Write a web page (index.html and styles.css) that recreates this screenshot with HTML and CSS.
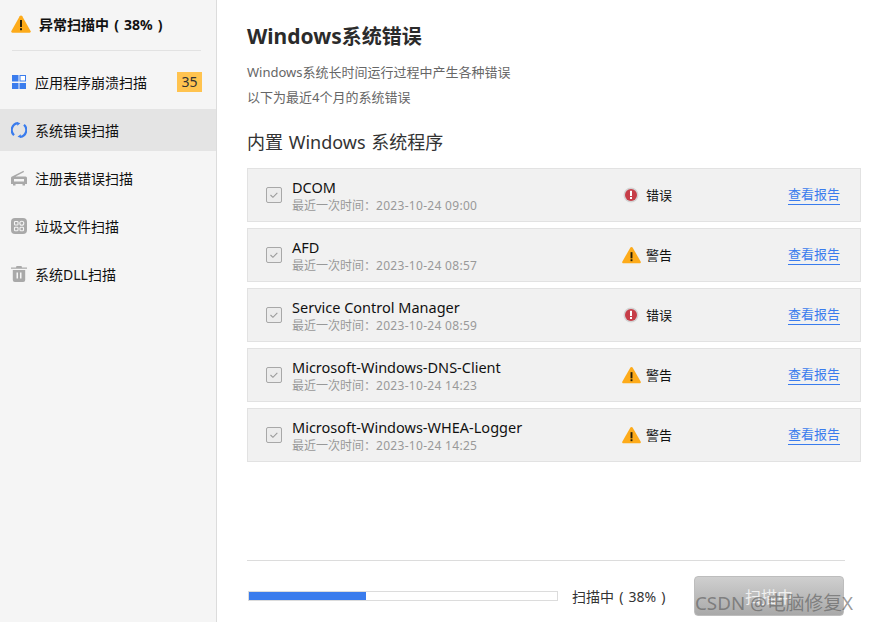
FILE: index.html
```html
<!DOCTYPE html>
<html lang="zh-CN">
<head>
<meta charset="utf-8">
<title>Windows系统错误</title>
<link rel="stylesheet" href="styles.css">
</head>
<body>
<div class="app">
  <aside class="sidebar">
    <div class="status">
      <svg class="status-icon" viewBox="0 0 20 18"><path d="M10 0.500c.6 0 1 .3 1.300.8l8.300 14.600c.5.9 0 1.800-1 1.800H1.400c-1 0-1.500-.9-1-1.800L8.700 1.300C9 .8 9.400.5 10 .5z" fill="#fdab1a"/><rect x="9" y="5" width="2" height="7" fill="#2a2008"/><rect x="9" y="13.200" width="2" height="2" fill="#2a2008"/></svg>
      <span class="status-text">异常扫描中 ( 38% )</span>
    </div>
    <nav class="nav">
      <div class="nav-item">
        <svg class="nav-icon" viewBox="-1 -1 16 16"><rect x="0" y="0" width="6.500" height="6.500" fill="#3a7ced"/><rect x="8" y=".5" width="5.500" height="5.500" fill="#fff" stroke="#3a7ced"/><rect x="0" y="8" width="6.500" height="6" fill="#3a7ced"/><rect x="7.500" y="8" width="6.500" height="6" fill="#3a7ced"/></svg>
        <span class="nav-label">应用程序崩溃扫描</span>
        <span class="badge">35</span>
      </div>
      <div class="nav-item active">
        <svg class="nav-icon" viewBox="0 0 16 16"><path d="M3 13.200A7 7 0 0 1 6.800 1.100" fill="none" stroke="#3a7ced" stroke-width="2.200"/><path d="M6 0l3.400 1.300L6.300 3.800z" fill="#3a7ced"/><path d="M13 2.800A7 7 0 0 1 9.200 14.900" fill="none" stroke="#3a7ced" stroke-width="2.200"/><path d="M10 16l-3.400-1.300 3.100-2.500z" fill="#3a7ced"/></svg>
        <span class="nav-label">系统错误扫描</span>
      </div>
      <div class="nav-item">
        <svg class="nav-icon" viewBox="0 0 16 16"><path d="M1 6.500L12.500 .8l.5 1.200L4.500 6.500H14.500a1.500 1.500 0 0 1 1.500 1.500v6H14v1.500h-2.500V14h-7v1.500H2V14H0V8c0-.7.4-1.200 1-1.500z" fill="#a9a9a9"/><rect x="3" y="9" width="10" height="2.500" fill="#f5f5f5"/></svg>
        <span class="nav-label">注册表错误扫描</span>
      </div>
      <div class="nav-item">
        <svg class="nav-icon" viewBox="0 0 16 16"><rect width="16" height="16" rx="4" fill="#a9a9a9"/><rect x="3.500" y="3.500" width="3.500" height="3.500" rx=".8" fill="none" stroke="#f5f5f5" stroke-width="1.100"/><circle cx="10.800" cy="5.200" r="2" fill="none" stroke="#f5f5f5" stroke-width="1.100"/><rect x="3.500" y="9.300" width="3.500" height="3.500" rx=".8" fill="none" stroke="#f5f5f5" stroke-width="1.100"/><rect x="9" y="9.300" width="3.500" height="3.500" rx=".8" fill="none" stroke="#f5f5f5" stroke-width="1.100"/></svg>
        <span class="nav-label">垃圾文件扫描</span>
      </div>
      <div class="nav-item">
        <svg class="nav-icon" viewBox="0 0 16 16"><path d="M5.500 0h5l.5 1.500h5v1.300H0V1.500h5z" fill="#a9a9a9"/><path d="M1.800 4h12.400v10a2 2 0 0 1-2 2H3.800a2 2 0 0 1-2-2z" fill="#a9a9a9"/><rect x="5.500" y="6.500" width="1.500" height="6" fill="#f5f5f5"/><rect x="9" y="6.500" width="1.500" height="6" fill="#f5f5f5"/></svg>
        <span class="nav-label">系统DLL扫描</span>
      </div>
    </nav>
  </aside>
  <main class="main">
    <h1 class="title"><span class="title-latin">Windows</span>系统错误</h1>
    <p class="desc">Windows系统长时间运行过程中产生各种错误</p>
    <p class="desc">以下为最近4个月的系统错误</p>
    <h2 class="subtitle">内置 Windows 系统程序</h2>
    <div class="rows">
      <div class="row">
        <span class="check"><svg viewBox="0 0 16 16"><path d="M4 8l2.800 2.600 5-5" fill="none" stroke="#999" stroke-width="1.200"/></svg></span>
        <div class="info"><div class="name">DCOM</div><div class="time">最近一次时间：<span class="date">2023-10-24 09:00</span></div></div>
        <div class="state">
          <span class="state-icon"><svg class="ico-err" viewBox="0 0 16 16"><circle cx="8" cy="8" r="7.500" fill="#d3d3d3"/><circle cx="8" cy="8" r="6" fill="#c73e48"/><rect x="7" y="3.800" width="2" height="5.200" fill="#fff"/><rect x="7" y="10" width="2" height="2" fill="#fff"/></svg></span>
          <span>错误</span>
        </div>
        <a class="report" href="#">查看报告</a>
      </div>
      <div class="row">
        <span class="check"><svg viewBox="0 0 16 16"><path d="M4 8l2.800 2.600 5-5" fill="none" stroke="#999" stroke-width="1.200"/></svg></span>
        <div class="info"><div class="name">AFD</div><div class="time">最近一次时间：<span class="date">2023-10-24 08:57</span></div></div>
        <div class="state">
          <span class="state-icon"><svg class="ico-warn" viewBox="0 0 20 18"><path d="M10 0.500c.6 0 1 .3 1.300.8l8.300 14.600c.5.9 0 1.800-1 1.800H1.400c-1 0-1.500-.9-1-1.800L8.700 1.300C9 .8 9.400.5 10 .5z" fill="#fdab1a"/><rect x="9" y="6" width="2" height="6.500" fill="#2a2008"/><rect x="9" y="13.500" width="2" height="2" fill="#2a2008"/></svg></span>
          <span>警告</span>
        </div>
        <a class="report" href="#">查看报告</a>
      </div>
      <div class="row">
        <span class="check"><svg viewBox="0 0 16 16"><path d="M4 8l2.800 2.600 5-5" fill="none" stroke="#999" stroke-width="1.200"/></svg></span>
        <div class="info"><div class="name">Service Control Manager</div><div class="time">最近一次时间：<span class="date">2023-10-24 08:59</span></div></div>
        <div class="state">
          <span class="state-icon"><svg class="ico-err" viewBox="0 0 16 16"><circle cx="8" cy="8" r="7.500" fill="#d3d3d3"/><circle cx="8" cy="8" r="6" fill="#c73e48"/><rect x="7" y="3.800" width="2" height="5.200" fill="#fff"/><rect x="7" y="10" width="2" height="2" fill="#fff"/></svg></span>
          <span>错误</span>
        </div>
        <a class="report" href="#">查看报告</a>
      </div>
      <div class="row">
        <span class="check"><svg viewBox="0 0 16 16"><path d="M4 8l2.800 2.600 5-5" fill="none" stroke="#999" stroke-width="1.200"/></svg></span>
        <div class="info"><div class="name">Microsoft-Windows-DNS-Client</div><div class="time">最近一次时间：<span class="date">2023-10-24 14:23</span></div></div>
        <div class="state">
          <span class="state-icon"><svg class="ico-warn" viewBox="0 0 20 18"><path d="M10 0.500c.6 0 1 .3 1.300.8l8.300 14.600c.5.9 0 1.800-1 1.800H1.400c-1 0-1.500-.9-1-1.800L8.700 1.300C9 .8 9.400.5 10 .5z" fill="#fdab1a"/><rect x="9" y="6" width="2" height="6.500" fill="#2a2008"/><rect x="9" y="13.500" width="2" height="2" fill="#2a2008"/></svg></span>
          <span>警告</span>
        </div>
        <a class="report" href="#">查看报告</a>
      </div>
      <div class="row">
        <span class="check"><svg viewBox="0 0 16 16"><path d="M4 8l2.800 2.600 5-5" fill="none" stroke="#999" stroke-width="1.200"/></svg></span>
        <div class="info"><div class="name">Microsoft-Windows-WHEA-Logger</div><div class="time">最近一次时间：<span class="date">2023-10-24 14:25</span></div></div>
        <div class="state">
          <span class="state-icon"><svg class="ico-warn" viewBox="0 0 20 18"><path d="M10 0.500c.6 0 1 .3 1.300.8l8.300 14.600c.5.9 0 1.800-1 1.800H1.400c-1 0-1.500-.9-1-1.800L8.700 1.300C9 .8 9.400.5 10 .5z" fill="#fdab1a"/><rect x="9" y="6" width="2" height="6.500" fill="#2a2008"/><rect x="9" y="13.500" width="2" height="2" fill="#2a2008"/></svg></span>
          <span>警告</span>
        </div>
        <a class="report" href="#">查看报告</a>
      </div>
    </div>
    <footer class="footer">
      <div class="progress"><div class="progress-fill" style="width:38%"></div></div>
      <span class="progress-text">扫描中 ( 38% )</span>
      <button class="scan-btn" type="button">扫描中</button>
    </footer>
  </main>
</div>
<div class="watermark">CSDN @电脑修复X</div>
</body>
</html>
```
FILE: styles.css
```css
* { box-sizing: border-box; }
html, body { margin: 0; height: 622px; overflow: hidden; background: #fff; }
body { font-family: "Noto Sans", "Noto Sans CJK SC", sans-serif; font-size: 14px; color: #111; }
.app { display: flex; height: 622px; }
.sidebar { width: 217px; flex: none; background: #f5f5f5; border-right: 1px solid #dcdcdc; padding-top: 15px; }
.status { display: flex; align-items: center; gap: 8px; height: 36px; margin: 0 15px 10px 12px; padding-bottom: 17px; border-bottom: 1px solid #e2e2e2; font-weight: 700; line-height: 20px; color: #111; }
.status-icon { width: 20px; height: 18px; flex: none; margin-left: -1px; }
.status-text { padding-top: 2px; word-spacing: 1.500px; white-space: nowrap; }
.nav { display: flex; flex-direction: column; gap: 6px; }
.nav-item { display: flex; align-items: center; height: 42px; padding: 0 14px 0 11px; line-height: 20px; }
.nav-item.active { background: #e4e4e4; }
.nav-icon { width: 16px; height: 16px; flex: none; margin-right: 8px; }
.nav-label { flex: 1; white-space: nowrap; padding-top: 2px; }
.badge { width: 25px; height: 20px; line-height: 20px; text-align: center; background: #ffc34f; color: #333; font-size: 14px; margin-bottom: 1px; }
.main { flex: 1; min-width: 0; padding: 0 8px 0 30px; display: flex; flex-direction: column; }
.title { margin: 22px 0 11px; font-size: 20px; line-height: 28px; font-weight: 700; color: #2b2b2b; }
.title-latin { font-size: 21px; }
.desc { margin: 0 0 5px; font-size: 13px; line-height: 20px; color: #666; }
.subtitle { margin: 17px 0 13px; font-size: 18px; line-height: 26px; font-weight: 400; color: #333; word-spacing: 1px; }
.rows { display: flex; flex-direction: column; gap: 6px; }
.row { display: flex; align-items: center; height: 54px; background: #f1f1f1; border: 1px solid #e2e2e2; padding-left: 18px; }
.check { width: 16px; height: 16px; flex: none; border: 1px solid #a8a8a8; border-radius: 2px; background: #ececec; margin-right: 10px; display: flex; }
.check svg { width: 14px; height: 14px; }
.info { width: 329px; flex: none; padding-top: 2px; }
.name { font-size: 14.500px; line-height: 18px; color: #111; white-space: nowrap; }
.time { margin-top: 2px; font-size: 12px; line-height: 16px; color: #999; white-space: nowrap; }
.date { letter-spacing: 0.300px; }
.state { display: flex; align-items: center; width: 167px; flex: none; font-size: 13px; line-height: 20px; color: #111; }
.state-icon { width: 24px; height: 20px; flex: none; display: flex; align-items: center; justify-content: center; margin-right: 3px; margin-left: -2px; }
.ico-err { width: 16px; height: 16px; }
.ico-warn { width: 19px; height: 18px; }
.report { font-size: 13px; line-height: 17px; padding-bottom: 1px; color: #3a7ced; text-decoration: none; border-bottom: 1px solid #3a7ced; white-space: nowrap; }
.footer { margin-top: auto; height: 62px; margin-right: 16px; border-top: 1px solid #dcdcdc; display: flex; align-items: flex-start; padding-left: 1px; }
.progress { width: 310px; height: 10px; margin-top: 30px; border: 1px solid #dcdcdc; background: #fff; flex: none; }
.progress-fill { height: 100%; background: #3a7ced; }
.progress-text { margin: 26px 0 0 14px; width: 122px; flex: none; font-size: 14px; line-height: 20px; color: #333; white-space: nowrap; word-spacing: 1.500px; }
.scan-btn { width: 150px; height: 40px; margin-top: 15px; border: 1px solid #bdbdbd; border-radius: 4px; background: linear-gradient(#cfcfcf, #a9a9a9); color: #f0f0f0; font: 16px "Noto Sans CJK SC", sans-serif; padding: 0; }
.watermark { position: absolute; left: 695px; top: 591px; font-size: 18.800px; line-height: 24px; color: rgba(90, 90, 90, 0.62); white-space: nowrap; }
```
